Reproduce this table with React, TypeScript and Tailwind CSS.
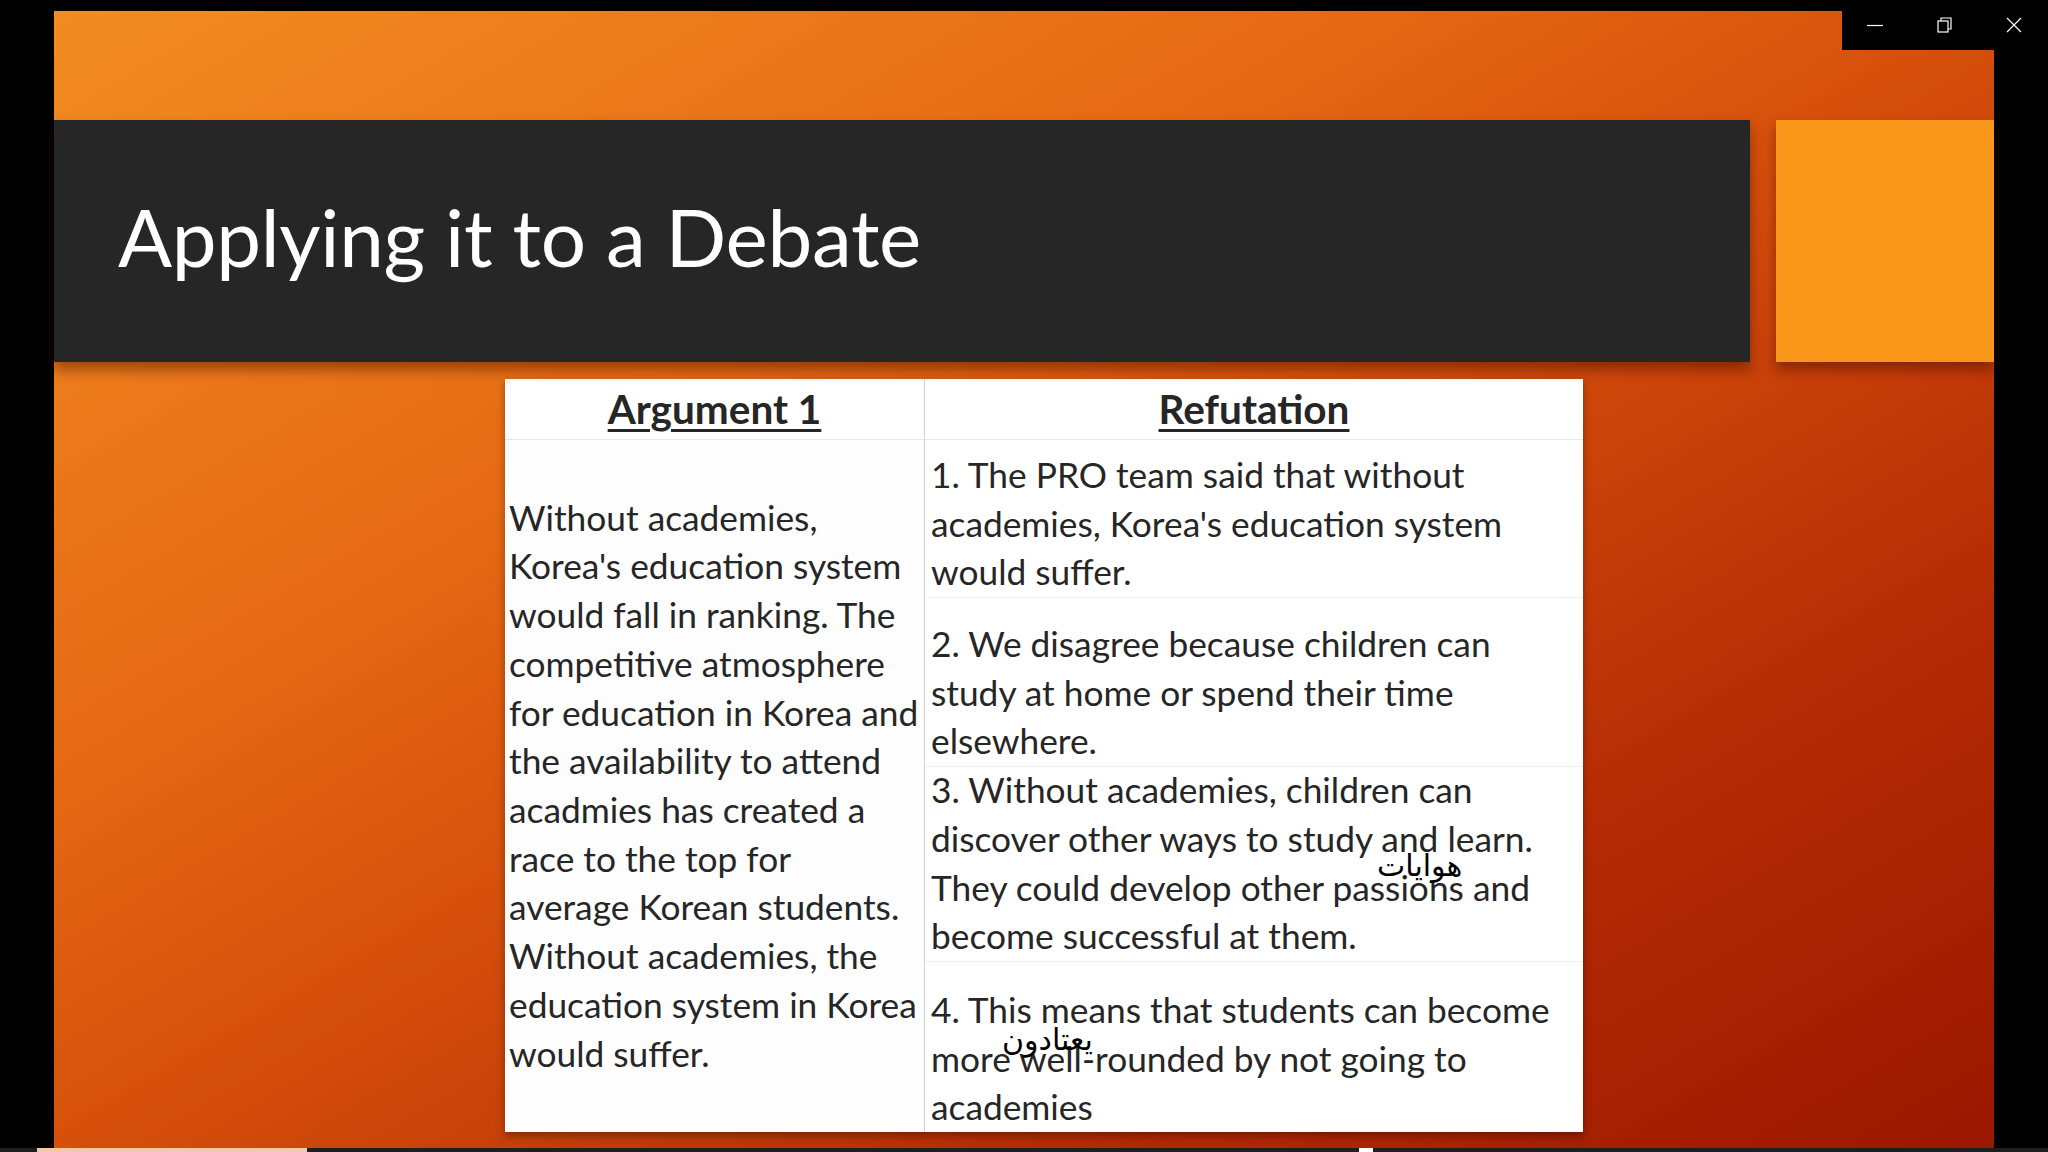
import React from 'react';

interface Row {
  lines: string[];
  h: string;
}

const argumentLines: string[] = [
  'Without academies,',
  "Korea's education system",
  'would fall in ranking. The',
  'competitive atmosphere',
  'for education in Korea and',
  'the availability to attend',
  'acadmies has created a',
  'race to the top for',
  'average Korean students.',
  'Without academies, the',
  'education system in Korea',
  'would suffer.'
];

const refutationRows: Row[] = [
  {
    lines: ['1. The PRO team said that without', "academies, Korea's education system", 'would suffer.'],
    h: 'h-[158px]'
  },
  {
    lines: ['2. We disagree because children can', 'study at home or spend their time', 'elsewhere.'],
    h: 'h-[169px]'
  },
  {
    lines: [
      '3. Without academies, children can',
      'discover other ways to study and learn.',
      'They could develop other passions and',
      'become successful at them.'
    ],
    h: 'h-[195px]'
  },
  {
    lines: ['4. This means that students can become', 'more well-rounded by not going to', 'academies'],
    h: 'h-[170px]'
  }
];

const WindowControls: React.FC = () => (
  <div className="absolute top-0 right-0 w-[206px] h-[50px] bg-black flex items-center justify-between pl-[25px] pr-[26px]">
    <svg width="16" height="16" viewBox="0 0 16 16" className="text-white">
      <line x1="0" y1="8.5" x2="16" y2="8.5" stroke="currentColor" strokeWidth="1.2" />
    </svg>
    <svg width="16" height="16" viewBox="0 0 16 16" className="text-white">
      <rect x="1" y="4" width="10" height="11" fill="none" stroke="currentColor" strokeWidth="1.2" />
      <path d="M4 4V1h10v11h-3" fill="none" stroke="currentColor" strokeWidth="1.2" />
    </svg>
    <svg width="16" height="16" viewBox="0 0 16 16" className="text-white">
      <path d="M1 1l14 14M15 1L1 15" stroke="currentColor" strokeWidth="1.2" />
    </svg>
  </div>
);

const App: React.FC = () => {
  return (
    <div className="relative w-[2048px] h-[1152px] bg-black overflow-hidden pt-[11px] px-[54px] font-['Lato',sans-serif]">
      {/* slide */}
      <div className="relative h-[1137px] bg-[linear-gradient(to_bottom_right,#f28c22_0%,#e66a14_33%,#d6500c_50%,#b52c05_75%,#9a1700_100%)] pt-[109px]">
        <div className="flex gap-[26px]">
          <div className="w-[1696px] h-[242px] bg-[#262626] flex items-center pl-[64px] shadow-[0_8px_12px_rgba(60,10,0,0.45)]">
            <h1 className="text-white text-[80px] font-normal leading-none tracking-[-0.3px] -mt-[10px]">
              Applying it to a Debate
            </h1>
          </div>
          <div className="flex-1 h-[242px] bg-[#f8961a] shadow-[0_8px_12px_rgba(60,10,0,0.45)]"></div>
        </div>

        {/* table */}
        <div className="ml-[451px] mt-[17px] w-[1078px] bg-white shadow-[0_4px_8px_rgba(0,0,0,0.35)] grid grid-cols-[420px_658px] text-[#262626] text-[35.3px] leading-[48.7px]">
          <div className="h-[61px] flex items-center justify-center border-b border-[#e6e6e6] border-r border-r-[#d0d0d0]">
            <span className="font-bold underline decoration-[3px] underline-offset-[5px] text-[40.5px]">Argument 1</span>
          </div>
          <div className="h-[61px] flex items-center justify-center border-b border-[#e6e6e6]">
            <span className="font-bold underline decoration-[3px] underline-offset-[5px] text-[40.5px]">Refutation</span>
          </div>

          <div className="h-[692px] flex flex-col justify-center pl-[4px] border-r border-[#d0d0d0] bg-[#fdfdfd]">
            {argumentLines.map((line) => (
              <div key={line} className="whitespace-nowrap">
                {line}
              </div>
            ))}
          </div>
          <div className="flex flex-col">
            {refutationRows.map((row, i) => (
              <div
                key={i}
                className={`${row.h} flex flex-col justify-end pl-[6px] ${i < 3 ? 'border-b border-[#efefef]' : ''}`}
              >
                {row.lines.map((line) => (
                  <div key={line} className="whitespace-nowrap">
                    {line}
                  </div>
                ))}
              </div>
            ))}
          </div>
        </div>

        {/* arabic notes over the table */}
        <span className="absolute left-[1323px] top-[840px] text-black text-[30px] leading-none font-['DejaVu_Sans',sans-serif]">
          هوايات
        </span>
        <span className="absolute left-[948px] top-[1014px] text-black text-[30px] leading-none font-['DejaVu_Sans',sans-serif]">
          يعتادون
        </span>
      </div>

      {/* player strip */}
      <div className="absolute left-0 bottom-0 w-full h-[4px] bg-[#1e1e1e] flex">
        <div className="ml-[37px] w-[270px] h-full bg-[#f3c9a8]"></div>
        <div className="ml-[1052px] w-[14px] h-full bg-white"></div>
      </div>

      <WindowControls />
    </div>
  );
};

export default App;
